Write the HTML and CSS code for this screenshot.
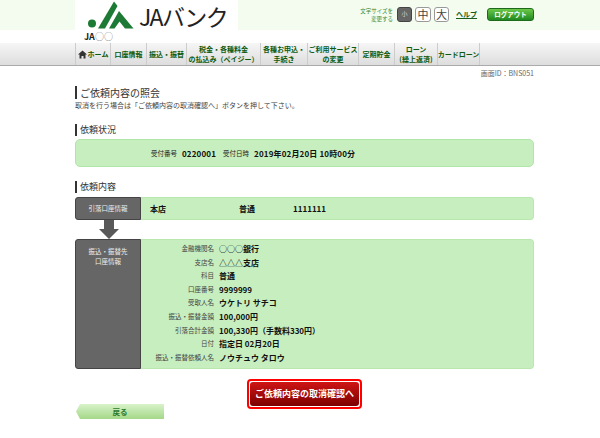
FILE: index.html
```html
<!DOCTYPE html>
<html lang="ja">
  <head>
    <meta charset="UTF-8" />
    <meta name="viewport" content="width=device-width, initial-scale=1.0" />
    <title>ご依頼内容の照会</title>
    <link rel="stylesheet" href="styles.css">
  </head>
  <body>
    <header class="header">
      <div class="logo">
        <svg class="logo-mark" width="54" height="30" viewBox="0 0 54 30">
          <circle cx="12" cy="23.5" r="4" fill="#1d7a35" />
          <polygon points="18,28.500 25,28.500 37.500,6 34,1.500" fill="#1d7a35" />
          <polygon points="39,11 53.500,28.500 45,28.500 39.500,21.500 34.500,28.500 29,28.500" fill="#1d7a35" />
        </svg>
        <span class="logo-text">JAバンク</span>
      </div>
      <div class="tools">
        <div class="size-label">文字サイズを<br />変更する</div>
        <div class="size-btn size-on">小</div>
        <div class="size-btn size-mid">中</div>
        <div class="size-btn">大</div>
        <a class="help">ヘルプ</a>
        <div class="logout">ログアウト</div>
      </div>
    </header>
    <div class="ja-name">JA<span class="ja-circles">○○</span></div>
    <nav class="nav">
      <div class="nav-item nav-home">
        <svg width="9" height="9" viewBox="0 0 9 9"><polygon points="4.500,0.500 9,4.500 7.500,4.500 7.500,8.500 5.500,8.500 5.500,6 3.500,6 3.500,8.500 1.500,8.500 1.500,4.500 0,4.500" fill="#333" /></svg>
        <span>ホーム</span>
      </div>
      <div class="nav-item nav-account">口座情報</div>
      <div class="nav-item nav-transfer">振込・振替</div>
      <div class="nav-item nav-tax">税金・各種料金<br />の払込み（ペイジー）</div>
      <div class="nav-item nav-apply">各種お申込・<br />手続き</div>
      <div class="nav-item nav-service">ご利用サービス<br />の変更</div>
      <div class="nav-item nav-saving">定期貯金</div>
      <div class="nav-item nav-loan">ローン<br />(繰上返済)</div>
      <div class="nav-item nav-card">カードローン</div>
    </nav>
    <div class="screen-id">画面ID：BNS051</div>

    <main class="main">
      <h1 class="title">ご依頼内容の照会</h1>
      <p class="lead">取消を行う場合は「ご依頼内容の取消確認へ」ボタンを押して下さい。</p>

      <h2 class="subtitle subtitle-status">依頼状況</h2>
      <div class="status-box">
        <span class="label">受付番号</span>
        <b class="status-value">0220001</b>
        <span class="label">受付日時</span>
        <b class="status-value">2019年02月20日 10時00分</b>
      </div>

      <h2 class="subtitle subtitle-detail">依頼内容</h2>
      <div class="row row-from">
        <div class="row-head row-head-mid">引落口座情報</div>
        <div class="row-body from-body">
          <b class="from-branch">本店</b>
          <b class="from-type">普通</b>
          <b>1111111</b>
        </div>
      </div>
      <svg class="arrow" width="20" height="19" viewBox="0 0 20 19">
        <polygon points="5,0 15,0 15,9 20,9 10,19 0,9 5,9" fill="#595959" />
      </svg>
      <div class="row row-to">
        <div class="row-head">振込・振替先<br />口座情報</div>
        <dl class="row-body detail">
          <dt>金融機関名</dt><dd>○○○銀行</dd>
          <dt>支店名</dt><dd>△△△支店</dd>
          <dt>科目</dt><dd>普通</dd>
          <dt>口座番号</dt><dd>9999999</dd>
          <dt>受取人名</dt><dd>ウケトリ サチコ</dd>
          <dt>振込・振替金額</dt><dd>100,000円</dd>
          <dt>引落合計金額</dt><dd>100,330円（手数料330円）</dd>
          <dt>日付</dt><dd>指定日 02月20日</dd>
          <dt>振込・振替依頼人名</dt><dd>ノウチュウ タロウ</dd>
        </dl>
      </div>

      <div class="actions">
        <a class="back">戻る</a>
        <div class="confirm-ring"><a class="confirm">ご依頼内容の取消確認へ</a></div>
      </div>
    </main>
  </body>
</html>
```

FILE: styles.css
```css
* {
  margin: 0;
  padding: 0;
  box-sizing: border-box;
}
body {
  background-color: #fff;
  color: #222;
  font-family: "Noto Sans CJK JP", "Liberation Sans", sans-serif;
  font-size: 8px;
  overflow: hidden;
}
.header {
  display: flex;
  justify-content: space-between;
  height: 30px;
  padding: 0 66px 0 75px;
  background-color: #f3fcef;
}
.logo {
  display: flex;
  width: 163px;
  background-color: #fff;
}
.logo-mark {
  flex: none;
  margin-left: 5px;
}
.logo-text {
  margin-left: 5px;
  color: #222;
  font-size: 23px;
  line-height: 33px;
  letter-spacing: -1.700px;
}
.tools {
  display: flex;
  align-items: flex-start;
  padding-top: 7px;
}
.size-label {
  margin-right: 4px;
  color: #3a8a3a;
  font-size: 5.500px;
  line-height: 8px;
  text-align: right;
}
.size-btn {
  width: 15px;
  height: 15px;
  margin-right: 3px;
  border: 1px solid #999;
  border-radius: 3px;
  background-color: #fff;
  color: #444;
  font-size: 11px;
  line-height: 12px;
  text-align: center;
}
.size-mid {
  width: 16px;
}
.size-on {
  border-color: #444;
  background-color: #666;
  color: #ddd;
  font-size: 6px;
}
.help {
  margin: 1px 10px 0 4px;
  color: #1a5a1a;
  font-size: 7px;
  font-weight: 700;
  line-height: 12px;
  text-decoration: underline;
}
.logout {
  width: 47px;
  height: 13px;
  margin-top: 1px;
  border: 1px solid #1d6a1d;
  border-radius: 3px;
  background: linear-gradient(#6cc84a, #1f8a1f);
  color: #fff;
  font-size: 6.500px;
  font-weight: 700;
  line-height: 11px;
  text-align: center;
}
.ja-name {
  height: 13px;
  padding-left: 84px;
  color: #222;
  font-size: 9px;
  font-weight: 700;
  line-height: 13px;
}
.ja-circles {
  color: #888;
  font-weight: 400;
}
.nav {
  display: flex;
  height: 23px;
  padding-left: 75px;
  border-bottom: 1px solid #aaa;
  background: linear-gradient(#f6f6f6, #dddddd);
}
.nav-item {
  display: flex;
  align-items: center;
  justify-content: center;
  flex: none;
  border-left: 1px solid #ccc;
  color: #0d5a0d;
  font-size: 7px;
  font-weight: 700;
  line-height: 10px;
  text-align: center;
  white-space: nowrap;
}
.nav-item:last-child {
  border-right: 1px solid #ccc;
}
.nav-home {
  gap: 1px;
  width: 35px;
}
.nav-account {
  width: 36px;
}
.nav-transfer {
  width: 40px;
}
.nav-tax {
  width: 74px;
}
.nav-apply {
  width: 47px;
}
.nav-service {
  width: 51px;
}
.nav-saving {
  width: 36px;
}
.nav-loan {
  width: 43px;
}
.nav-card {
  width: 43px;
}
.screen-id {
  padding-right: 66px;
  color: #666;
  font-size: 7px;
  line-height: 14px;
  text-align: right;
}
.main {
  width: 459px;
  margin-left: 75px;
}
.title {
  margin-top: 6px;
  padding-left: 3px;
  border-left: 2px solid #333;
  color: #333;
  font-size: 10px;
  font-weight: 400;
  line-height: 13px;
}
.lead {
  margin-top: 1px;
  color: #444;
  font-size: 7px;
  line-height: 11px;
}
.subtitle {
  padding-left: 3px;
  border-left: 2px solid #333;
  color: #333;
  font-size: 9px;
  font-weight: 400;
  line-height: 12px;
}
.subtitle-status {
  margin-top: 13px;
}
.subtitle-detail {
  margin-top: 14px;
}
.status-box {
  display: flex;
  align-items: center;
  height: 28px;
  margin-top: 3px;
  padding-left: 75px;
  border: 1px solid #b2e6a8;
  border-radius: 5px;
  background-color: #c7eebf;
}
.label {
  margin-right: 5px;
  font-size: 6.500px;
}
.status-value {
  margin-right: 7px;
  color: #111;
  font-size: 8px;
  letter-spacing: 0.150px;
}
.row {
  display: flex;
}
.row-from {
  height: 23px;
  margin-top: 4px;
}
.row-to {
  height: 130px;
}
.row-head {
  flex: none;
  width: 66px;
  padding-top: 7px;
  border: 1px solid #444;
  border-radius: 3px 0 0 3px;
  background-color: #666;
  color: #eee;
  font-size: 6.500px;
  line-height: 9.500px;
  text-align: center;
}
.row-head-mid {
  padding-top: 6px;
}
.row-body {
  flex: 1;
  border: 1px solid #b8e8ae;
  border-left: none;
  border-radius: 0 4px 4px 0;
  background-color: #c7eebf;
}
.from-body {
  display: flex;
  align-items: center;
  padding-left: 9px;
  color: #111;
}
.from-branch {
  width: 89px;
}
.from-type {
  width: 54px;
}
.arrow {
  display: block;
  margin-left: 24px;
}
.detail {
  display: grid;
  grid-template-columns: 73px 1fr;
  grid-auto-rows: 13.600px;
  column-gap: 5px;
  padding-top: 2px;
}
.detail dt {
  color: #444;
  font-size: 6.500px;
  line-height: 13.600px;
  text-align: right;
}
.detail dd {
  color: #111;
  font-weight: 700;
  line-height: 13.600px;
}
.actions {
  display: grid;
  grid-template-columns: 1fr auto 1fr;
  height: 40px;
  margin-top: 10px;
}
.back {
  align-self: start;
  width: 88px;
  height: 15px;
  margin: 25px 0 0 1px;
  background: linear-gradient(#d8f2ca, #a4d888);
  clip-path: polygon(4px 0, 100% 0, 100% 100%, 4px 100%, 0 50%);
  color: #2a7a2a;
  font-size: 7.500px;
  font-weight: 700;
  line-height: 15px;
  text-align: center;
}
.confirm-ring {
  grid-column: 2;
  align-self: start;
  width: 115px;
  height: 30px;
  padding: 1px;
  border: 2px solid #f00;
  border-radius: 4px;
  background-color: #fff;
}
.confirm {
  display: block;
  height: 24px;
  border-radius: 3px;
  background: linear-gradient(#cf1515, #7c0000);
  color: #fff;
  font-size: 9px;
  font-weight: 700;
  line-height: 24px;
  text-align: center;
  white-space: nowrap;
}
```
